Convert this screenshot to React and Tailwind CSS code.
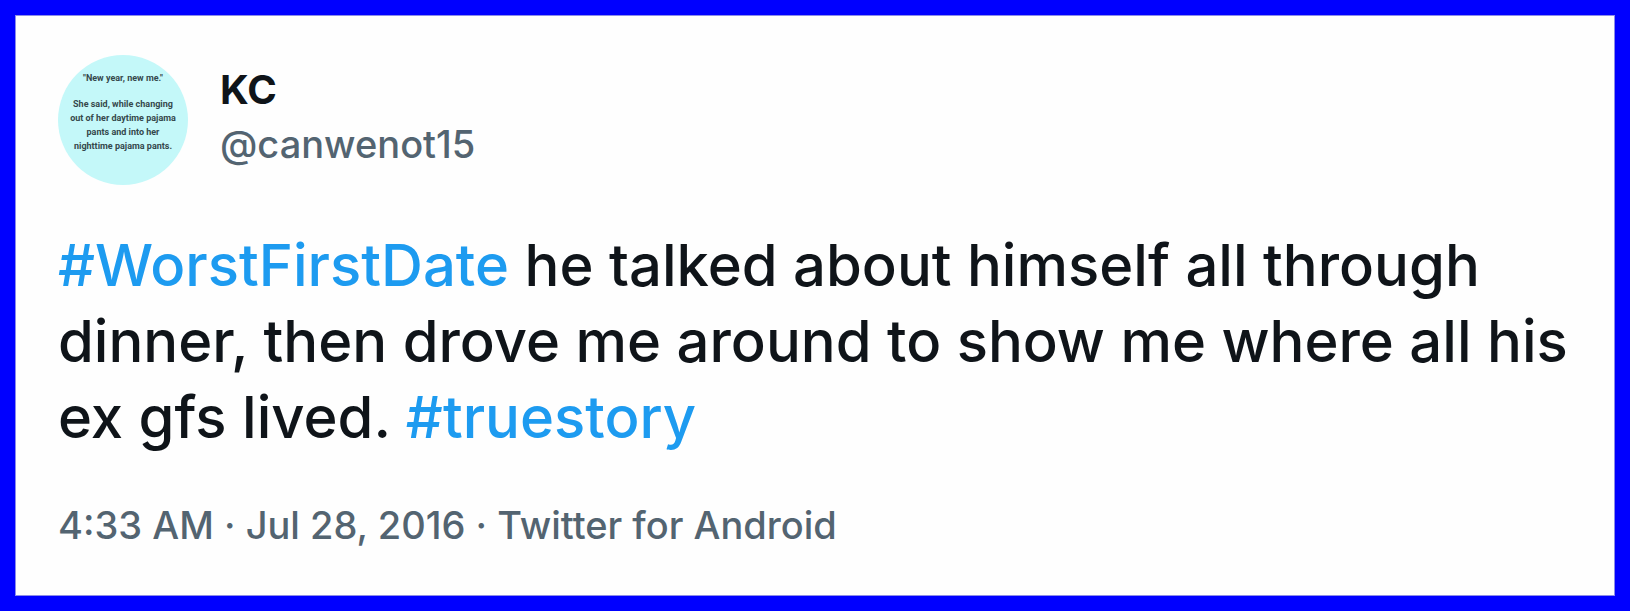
const tagClassName = 'text-[#1d9bf0] hover:underline'

const Avatar = () => (
  <div className="flex h-[130px] w-[130px] shrink-0 flex-col items-center rounded-full bg-[#c4f8f9] pt-4 text-center font-[Roboto,sans-serif] text-[9px] leading-[14px] font-bold text-[#35484c]">
    <p>"New year, new me."</p>
    <p className="mt-3 whitespace-nowrap">
      She said, while changing
      <br />
      out of her daytime pajama
      <br />
      pants and into her
      <br />
      nighttime pajama pants.
    </p>
  </div>
)

const App = () => {
  return (
    <main className="border-15 border-[#0000ff] bg-[#fefefe] font-[Inter,sans-serif] text-[#0f1419]">
      <article className="border border-[#8c8ce8] pt-[39px] pr-5 pb-[43px] pl-[42px]">
        <header className="flex items-start gap-8">
          <Avatar />
          <div className="pt-2 text-[38px] leading-[54px]">
            <h1 className="text-[40px] font-bold">KC</h1>
            <a href="#profile" className="block font-medium text-[#536471]">@canwenot15</a>
          </div>
        </header>

        <p className="mt-[42px] text-[58px] leading-[76px] font-medium">
          <a href="#worstfirstdate" className={tagClassName}>#WorstFirstDate</a> he talked about himself all through
          <br />
          dinner, then drove me around to show me where all his
          <br />
          ex gfs lived. <a href="#truestory" className={tagClassName}>#truestory</a>
        </p>

        <p className="mt-[43px] text-[38px] leading-[54px] font-medium text-[#536471]">
          <time dateTime="2016-07-28T04:33">4:33 AM · Jul 28, 2016</time> · Twitter for Android
        </p>
      </article>
    </main>
  )
}

export default App
